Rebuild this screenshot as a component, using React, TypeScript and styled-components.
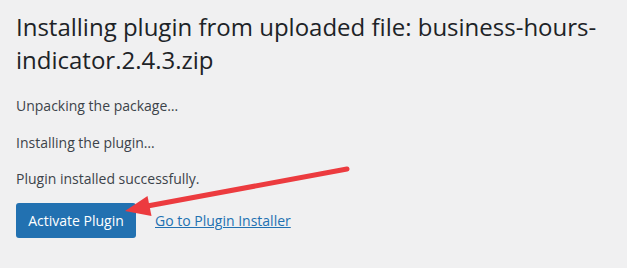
import styled, { createGlobalStyle } from "styled-components";

const GlobalStyle = createGlobalStyle`
  html, body {
    margin: 0;
    padding: 0;
    background: #f0f0f1;
  }
  body {
    font-family: "Segoe UI", "Open Sans", "Noto Sans", sans-serif;
    color: #3c434a;
  }
`;

const Page = styled.div`
  position: relative;
  width: 627px;
  height: 268px;
  overflow: hidden;
  padding: 0 16px;
  box-sizing: border-box;
`;

const Title = styled.h1`
  margin: 0;
  padding-top: 10px;
  width: 590px;
  font-size: 24px;
  font-weight: 400;
  line-height: 33px;
  color: #1d2327;
`;

const Step = styled.p<{ $gap: number }>`
  margin: 0;
  margin-top: ${(props) => props.$gap}px;
  font-size: 14px;
  line-height: 20px;
  color: #3c434a;
`;

const Actions = styled.div`
  display: flex;
  align-items: center;
  gap: 19px;
  margin-top: 14px;
`;

const PrimaryButton = styled.a`
  display: inline-flex;
  align-items: center;
  justify-content: center;
  width: 120px;
  height: 35px;
  background: #2271b1;
  border-radius: 3px;
  color: #fff;
  font-size: 14px;
  text-decoration: none;
`;

const TextLink = styled.a`
  color: #2271b1;
  font-size: 14px;
  text-decoration: underline;
`;

const Annotation = styled.svg`
  position: absolute;
  left: 0;
  top: 0;
  pointer-events: none;
`;

function App() {
  return (
    <Page>
      <GlobalStyle />
      <Title>Installing plugin from uploaded file: business-hours-indicator.2.4.3.zip</Title>
      <Step $gap={20}>Unpacking the package…</Step>
      <Step $gap={16.5}>Installing the plugin…</Step>
      <Step $gap={16.5}>Plugin installed successfully.</Step>
      <Actions>
        <PrimaryButton href="#">Activate Plugin</PrimaryButton>
        <TextLink href="#">Go to Plugin Installer</TextLink>
      </Actions>
      <Annotation width="627" height="268" viewBox="0 0 627 268">
        <line x1="347" y1="169" x2="142" y2="207" stroke="#ec3b3f" strokeWidth="5" strokeLinecap="round" />
        <polygon points="125,211 147.5,196 151.5,216" fill="#ec3b3f" />
      </Annotation>
    </Page>
  );
}

export default App;
